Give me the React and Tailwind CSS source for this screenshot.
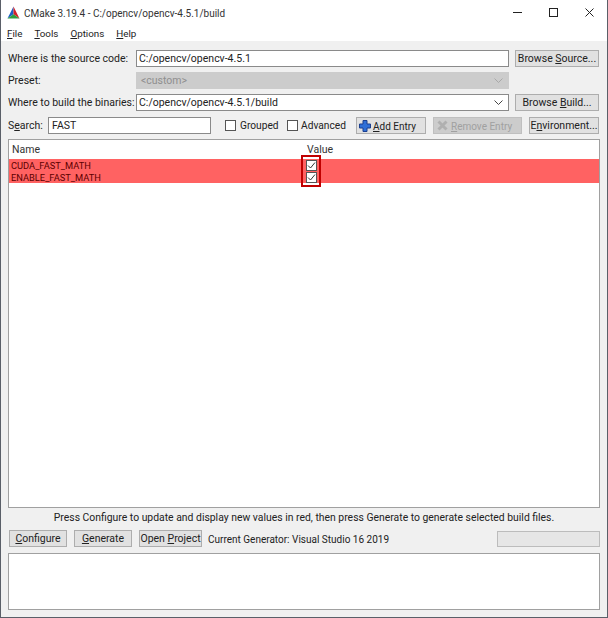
// pt-[2px] nudges text 1px down inside centered rows
const T = ({ className = '', children }) => <span className={`block pt-[2px] ${className}`}>{children}</span>

const Btn = ({ className = '', disabled, children }) => (
  <button
    className={`flex items-center justify-center h-[17px] border whitespace-nowrap ${disabled ? 'bg-[#cccccc] border-[#bfbfbf] text-[#a0a0a0]' : 'bg-[#e1e1e1] border-[#adadad]'} ${className}`}
  >
    {children}
  </button>
)

const Field = ({ className = '', children }) => (
  <div className={`flex items-center h-[17px] border border-[#8a8a8a] bg-white pl-[2px] pr-[1px] whitespace-nowrap ${className}`}>
    {children}
  </div>
)

const Check = ({ checked }) => (
  <span className="flex items-center justify-center w-[11px] h-[11px] border border-[#555] bg-white shrink-0">
    {checked && (
      <svg width="9" height="9" viewBox="0 0 9 9" fill="none" stroke="#333" strokeWidth="1">
        <path d="M1 4.5 L3.5 7 L8 1.5" />
      </svg>
    )}
  </span>
)

const Row = ({ name }) => (
  <div className="flex items-center h-3 pl-[2px] text-[#5c0000]">
    <T className="w-[295px] text-[9.3px]">{name}</T>
    <Check checked />
  </div>
)

const Chevron = ({ color }) => (
  <svg width="9" height="6" viewBox="0 0 9 6" fill="none" stroke={color} strokeWidth="1">
    <path d="M0.5 0.5 L4.5 4.5 L8.5 0.5" />
  </svg>
)

export default function App() {
  return (
    <div className="w-[608px] h-[618px] border-x border-b border-[#5a5f68] bg-[#f0f0f0] text-[10.5px] leading-none text-[#222] font-['Roboto','Liberation_Sans',sans-serif] overflow-hidden">
      {/* title bar */}
      <div className="flex items-center h-[25px] bg-white pl-[6px]">
        <svg width="13" height="13" viewBox="0 0 14 14">
          <path d="M7 0.5 L7 9 L0.5 13.5 Z" fill="#1c5fc4" />
          <path d="M7 0.5 L13.5 13.5 L7 9 Z" fill="#d3232b" />
          <path d="M7 9 L13.5 13.5 L0.5 13.5 Z" fill="#2e9e3f" />
        </svg>
        <T className="ml-[4px] text-[10px] text-[#333]">CMake 3.19.4 - C:/opencv/opencv-4.5.1/build</T>
        <div className="ml-auto flex items-center gap-[27px] pr-[13px]" aria-hidden="true">
          <svg width="9" height="9" viewBox="0 0 9 9" stroke="#222" strokeWidth="1"><path d="M0 4.5 H9" /></svg>
          <svg width="9" height="9" viewBox="0 0 9 9" fill="none" stroke="#222" strokeWidth="1"><rect x="0.5" y="0.5" width="8" height="8" /></svg>
          <svg width="9" height="9" viewBox="0 0 9 9" stroke="#222" strokeWidth="1"><path d="M0.5 0.5 L8.5 8.5 M8.5 0.5 L0.5 8.5" /></svg>
        </div>
      </div>
      {/* menu */}
      <div className="flex items-center gap-[12px] h-[16px] bg-white pl-[6px] text-[9.8px]">
        <T><u>F</u>ile</T>
        <T><u>T</u>ools</T>
        <T><u>O</u>ptions</T>
        <T><u>H</u>elp</T>
      </div>
      <div className="flex flex-col px-[7px] pt-[9px]">
        <div className="flex items-center h-[17px] whitespace-nowrap">
          <T className="w-[128px]">Where is the source code:</T>
          <Field className="w-[373px]"><T>C:/opencv/opencv-4.5.1</T></Field>
          <Btn className="w-[84px] ml-[6px]"><T>Browse <u>S</u>ource...</T></Btn>
        </div>
        <div className="flex items-center h-[17px] mt-[5px] whitespace-nowrap">
          <T className="w-[128px]">Preset:</T>
          <div className="flex items-center justify-between w-[373px] h-[17px] bg-[#cccccc] pl-[5px] pr-[6px] text-[#8f8f8f]">
            <T>&lt;custom&gt;</T>
            <Chevron color="#a8a8a8" />
          </div>
        </div>
        <div className="flex items-center h-[17px] mt-[5px] whitespace-nowrap">
          <T className="w-[128px]">Where to build the binaries:</T>
          <Field className="w-[373px] justify-between pr-[5px]">
            <T>C:/opencv/opencv-4.5.1/build</T>
            <Chevron color="#444" />
          </Field>
          <Btn className="w-[84px] ml-[6px]"><T>Browse <u>B</u>uild...</T></Btn>
        </div>
        <div className="flex items-center h-[17px] mt-[6px] whitespace-nowrap">
          <T className="w-[40px]">S<u>e</u>arch:</T>
          <Field className="w-[163px] pl-[3px]"><T>FAST</T></Field>
          <span className="ml-[14px]"><Check /></span>
          <T className="ml-[4px] w-[47px] text-[10.2px]">Grouped</T>
          <Check />
          <T className="ml-[3px] w-[55px] text-[10.2px]">Advanced</T>
          <Btn className="w-[70px] gap-[2px] justify-start pl-[2px] text-[10px]">
            <svg width="12" height="12" viewBox="0 0 12 12">
              <path d="M4 0.5 H8 V4 H11.5 V8 H8 V11.5 H4 V8 H0.5 V4 H4 Z" fill="#2f6fd6" stroke="#1b3f8f" />
            </svg>
            <T><u>A</u>dd Entry</T>
          </Btn>
          <Btn disabled className="w-[89px] ml-[7px] gap-[3px] justify-start pl-[3px] text-[10px]">
            <svg width="11" height="11" viewBox="0 0 11 11" stroke="#b0b0b0" strokeWidth="3">
              <path d="M1.5 1.5 L9.5 9.5 M9.5 1.5 L1.5 9.5" />
            </svg>
            <T><u>R</u>emove Entry</T>
          </Btn>
          <Btn className="w-[70px] ml-[7px]"><T>E<u>n</u>vironment...</T></Btn>
        </div>
        {/* cache table */}
        <div className="relative h-[369px] mt-[5px] border border-[#a0a0a0] bg-white">
          <div className="flex items-center h-[19px] pl-[3px] text-[#333]">
            <T className="w-[295px]">Name</T>
            <T>Value</T>
          </div>
          <div className="bg-[#ff6262] h-[24px]">
            <Row name="CUDA_FAST_MATH" />
            <Row name="ENABLE_FAST_MATH" />
          </div>
          <div className="absolute left-[292px] top-[15px] w-[20px] h-[32px] border-2 border-[#c00000]" />
        </div>
        <div className="mt-[3px] h-[13px] flex items-center justify-center whitespace-nowrap text-[10.4px]">
          <T>Press Configure to update and display new values in red, then press Generate to generate selected build files.</T>
        </div>
        <div className="flex items-center h-[17px] mt-[6px] pl-[1px] whitespace-nowrap">
          <Btn className="w-[58px]"><T><u>C</u>onfigure</T></Btn>
          <Btn className="w-[58px] ml-[7px]"><T><u>G</u>enerate</T></Btn>
          <Btn className="w-[63px] ml-[7px]"><T>Open <u>P</u>roject</T></Btn>
          <T className="ml-[6px] text-[10px]">Current Generator: Visual Studio 16 2019</T>
          <div className="ml-auto w-[103px] h-[16px] border border-[#bcbcbc] bg-[#e6e6e6]" />
        </div>
        <div className="h-[57px] mt-[6px] border border-[#a0a0a0] bg-white" />
      </div>
    </div>
  )
}
